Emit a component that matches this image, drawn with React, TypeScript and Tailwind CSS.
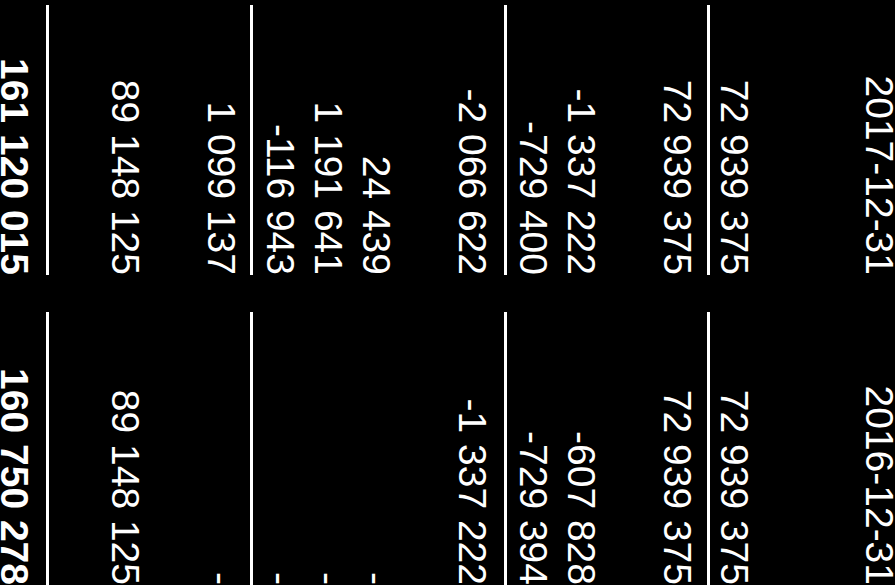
type Row = { a: string; b: string; bold?: boolean };

// Page is a scanned balance sheet lying on its side: laid out upright, then turned 90°.
function Cells({ a, b, bold }: Row) {
  return (
    <div
      className={`grid grid-cols-[270px_273px] gap-x-[37px] h-12 leading-[48px] text-right whitespace-nowrap ${
        bold ? "font-bold" : ""
      }`}
    >
      <div>{a}</div>
      <div>{b}</div>
    </div>
  );
}

function Rule({ className }: { className: string }) {
  return (
    <div className={`grid grid-cols-[270px_273px] gap-x-[37px] ${className}`}>
      <div className="h-[3px] bg-white" />
      <div className="h-[3px] bg-white" />
    </div>
  );
}

function Gap({ className }: { className: string }) {
  return <div className={className} />;
}

export default function App() {
  return (
    <div className="w-[895px] h-[585px] overflow-hidden bg-black">
      <div className="flow-root w-[585px] h-[895px] origin-top-left rotate-90 translate-x-[895px] pl-[5px] text-white text-[39px] font-['Liberation_Sans',Arial,sans-serif]">
        <div className="-mt-[8px]">
          <Cells a="2017-12-31" b="2016-12-31" />
        </div>
        <Gap className="h-[97px]" />
        <Cells a="72 939 375" b="72 939 375" />
        <Rule className="mb-[6px]" />
        <Cells a="72 939 375" b="72 939 375" />
        <Gap className="h-12" />
        <Cells a="-1 337 222" b="-607 828" />
        <Cells a="-729 400" b="-729 394" />
        <Rule className="mt-[2px] mb-[8px]" />
        <Cells a="-2 066 622" b="-1 337 222" />
        <Gap className="h-12" />
        <Cells a="24 439" b="-" />
        <Cells a="1 191 641" b="-" />
        <Cells a="-116 943" b="-" />
        <Rule className="mt-[3px] mb-[5px]" />
        <Cells a="1 099 137" b="-" />
        <Gap className="h-12" />
        <Cells a="89 148 125" b="89 148 125" />
        <Rule className="mt-[52px] mb-[8px]" />
        <Cells a="161 120 015" b="160 750 278" bold />
      </div>
    </div>
  );
}
